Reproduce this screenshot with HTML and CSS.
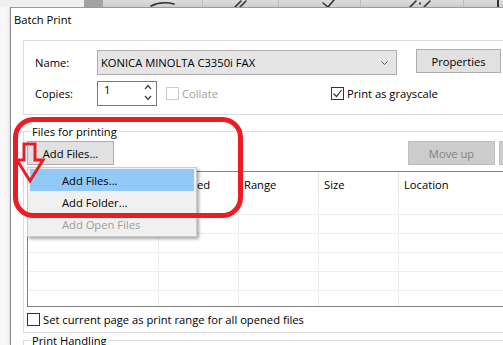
FILE: index.html
```html
<!DOCTYPE html>
<html lang="en">
<head>
    <meta charset="UTF-8">
    <meta name="viewport" content="width=device-width, initial-scale=1.0">
    <title>Batch Print</title>
    <link rel="stylesheet" href="styles.css">
</head>
<body>
    <div class="desktop">
        <svg width="503" height="7" viewBox="0 0 503 7">
            <defs>
                <linearGradient id="bar" x1="0" y1="0" x2="0" y2="1">
                    <stop offset="0" stop-color="#dddddd"/>
                    <stop offset="1" stop-color="#cccccc"/>
                </linearGradient>
            </defs>
            <rect width="503" height="7" fill="url(#bar)"/>
            <rect width="84" height="7" fill="#f0f0f0"/>
            <rect x="84" width="19" height="7" fill="#a2a2a2"/>
            <path d="M202.5 0v7M278.5 0v7M360.5 0v7M463.5 0v7" stroke="#bdbdbd"/>
            <g stroke="#333" stroke-width="1.6" fill="none" stroke-linecap="round">
                <path d="M151 6c6-3 15-4 23-2"/>
                <path d="M235 7l6-6M240 7l6-6"/>
                <path d="M323 3l5 4 6-7"/>
                <path d="M410 7l6-6M424 7l6-6M420 3v1"/>
            </g>
            <rect x="497" width="2" height="7" fill="#333"/>
        </svg>
    </div>

    <div class="dialog">
        <div class="title">Batch Print</div>

        <div class="printer-group">
            <div class="row">
                <span class="label">Name:</span>
                <div class="combo">
                    <span>KONICA MINOLTA C3350i FAX</span>
                    <svg width="7" height="4" viewBox="0 0 7 4"><path d="M0.5 0.5l3 3 3-3" stroke="#555" fill="none"/></svg>
                </div>
                <button class="btn btn-props">Properties</button>
            </div>
            <div class="row">
                <span class="label">Copies:</span>
                <div class="spin">
                    <span>1</span>
                    <svg width="9" height="20" viewBox="0 0 9 20">
                        <path d="M2 7l3-3.5 3 3.5M2 14l3 3.5 3-3.5" stroke="#444" stroke-width="1.3" fill="none"/>
                    </svg>
                </div>
                <label class="check check-collate disabled"><span class="box"></span>Collate</label>
                <label class="check"><span class="box"><svg width="11" height="11" viewBox="0 0 11 11"><path d="M1.5 5.5l3 3 5-6.5" stroke="#333" stroke-width="1.2" fill="none"/></svg></span>Print as grayscale</label>
            </div>
        </div>

        <fieldset class="group files-group">
            <legend>Files for printing</legend>
            <div class="toolbar">
                <button class="btn btn-add">Add Files...</button>
                <button class="btn btn-move" disabled>Move up</button>
                <button class="btn btn-next" disabled aria-label="Move down"></button>
            </div>
            <div class="file-table">
                <div class="thead">
                    <div class="th">Name</div>
                    <div class="th">Modified</div>
                    <div class="th">Range</div>
                    <div class="th">Size</div>
                    <div class="th">Location</div>
                </div>
                <div class="tr"><div class="td"></div><div class="td"></div><div class="td"></div><div class="td"></div><div class="td"></div></div>
                <div class="tr"><div class="td"></div><div class="td"></div><div class="td"></div><div class="td"></div><div class="td"></div></div>
                <div class="tr"><div class="td"></div><div class="td"></div><div class="td"></div><div class="td"></div><div class="td"></div></div>
                <div class="tr"><div class="td"></div><div class="td"></div><div class="td"></div><div class="td"></div><div class="td"></div></div>
                <div class="tr"><div class="td"></div><div class="td"></div><div class="td"></div><div class="td"></div><div class="td"></div></div>
                <div class="tr"><div class="td"></div><div class="td"></div><div class="td"></div><div class="td"></div><div class="td"></div></div>
            </div>
            <label class="check check-row"><span class="box"></span>Set current page as print range for all opened files</label>
        </fieldset>

        <fieldset class="group">
            <legend>Print Handling</legend>
        </fieldset>
    </div>

    <div class="context-menu">
        <div class="menu-item active">Add Files...</div>
        <div class="menu-item">Add Folder...</div>
        <div class="menu-item disabled">Add Open Files</div>
    </div>

    <svg class="annotation" width="503" height="345" viewBox="0 0 503 345">
        <rect x="15.5" y="119.5" width="225" height="96" rx="18" fill="none" stroke="#ed1c24" stroke-width="5"/>
        <polygon points="24,144 35,144 35,160 43,160 30,181 17,160 24,160" fill="none" stroke="#ed1c24" stroke-width="3"/>
    </svg>
</body>
</html>
```

FILE: styles.css
```css
body {
    margin: 0;
    width: 503px;
    height: 345px;
    overflow: hidden;
    position: relative;
    background: linear-gradient(to right, #f7f7f7, #ededed);
    font-family: "Open Sans", sans-serif;
    font-size: 11.2px;
    color: #000;
}
.desktop svg {
    display: block;
}
.dialog {
    margin-left: 10px;
    width: 540px;
    height: 338px;
    box-sizing: border-box;
    background-color: #fff;
    border-top: 1px solid #9a9a9a;
    border-left: 1px solid #888;
    box-shadow: -1px 0 3px rgba(0, 0, 0, 0.1);
    overflow: hidden;
}
.title {
    height: 32px;
    box-sizing: border-box;
    padding: 4px 0 0 3px;
}
.printer-group {
    margin-left: 12px;
    border: 1px solid #dcdcdc;
    border-right: none;
    padding: 9px 0 8px 11px;
    display: flex;
    flex-direction: column;
    gap: 6px;
}
.row {
    display: flex;
    align-items: center;
    height: 25px;
}
.label {
    width: 62px;
    flex: none;
}
.combo {
    width: 300px;
    height: 25px;
    box-sizing: border-box;
    background-color: #e5e5e5;
    border: 1px solid #adadad;
    display: flex;
    align-items: center;
    justify-content: space-between;
    padding: 0 8px 0 3px;
}
.btn {
    font: inherit;
    color: #000;
    background-color: #e1e1e1;
    border: 1px solid #adadad;
    height: 24px;
    padding: 0;
    flex: none;
}
.btn:disabled {
    background-color: #cccccc;
    border-color: #bfbfbf;
    color: #838383;
}
.btn-props {
    width: 85px;
    margin-left: 19px;
    align-self: flex-start;
    margin-top: -1px;
}
.spin {
    width: 60px;
    height: 25px;
    box-sizing: border-box;
    border: 1px solid #7a7a7a;
    display: flex;
    justify-content: space-between;
    align-items: flex-start;
    padding: 0 4px 0 6px;
}
.spin svg {
    display: block;
}
.check {
    display: flex;
    align-items: center;
    gap: 3px;
}
.box {
    width: 13px;
    height: 13px;
    box-sizing: border-box;
    border: 1px solid #333;
    background-color: #fff;
    flex: none;
}
.box svg {
    display: block;
}
.check-collate {
    width: 165px;
    margin-left: 9px;
    flex: none;
}
.disabled {
    color: #a0a0a0;
}
.disabled .box {
    border-color: #cccccc;
}
.group {
    margin: 9px 0 0 12px;
    border: 1px solid #dcdcdc;
    border-right: none;
    padding: 2px 0 6px 3px;
    min-width: 0;
}
.group legend {
    padding: 0 2px;
    margin-left: 3px;
}
.group + .group {
    margin-top: 0;
}
.toolbar {
    display: flex;
    height: 24px;
}
.btn-add {
    width: 87px;
}
.btn-move {
    width: 87px;
    margin-left: 294px;
}
.btn-next {
    width: 87px;
    margin-left: 4px;
}
.file-table {
    margin-top: 6px;
    height: 136px;
    box-sizing: border-box;
    border: 1px solid #828282;
    border-right: none;
    overflow: hidden;
}
.thead, .tr {
    display: grid;
    grid-template-columns: 131px 80px 80px 80px 1fr;
}
.thead {
    height: 24px;
}
.th {
    border-right: 1px solid #e5e5e5;
    padding-left: 5px;
    display: flex;
    align-items: center;
}
.tr {
    height: 19px;
    box-sizing: border-box;
    border-bottom: 1px solid #efefef;
}
.td {
    border-right: 1px solid #efefef;
}
.check-row {
    margin-top: 6px;
    height: 13px;
}
.context-menu {
    position: absolute;
    left: 27px;
    top: 167px;
    width: 170px;
    box-sizing: border-box;
    border: 1px solid #cccccc;
    background-color: #f0f0f0;
    padding: 1px 2px;
    box-shadow: 2px 2px 3px rgba(0, 0, 0, 0.35);
}
.menu-item {
    height: 22px;
    padding-left: 32px;
    display: flex;
    align-items: center;
}
.menu-item.active {
    background-color: #91c9f7;
}
.menu-item.disabled {
    color: #9d9d9d;
}
.annotation {
    position: absolute;
    left: 0;
    top: 0;
    pointer-events: none;
}
```
